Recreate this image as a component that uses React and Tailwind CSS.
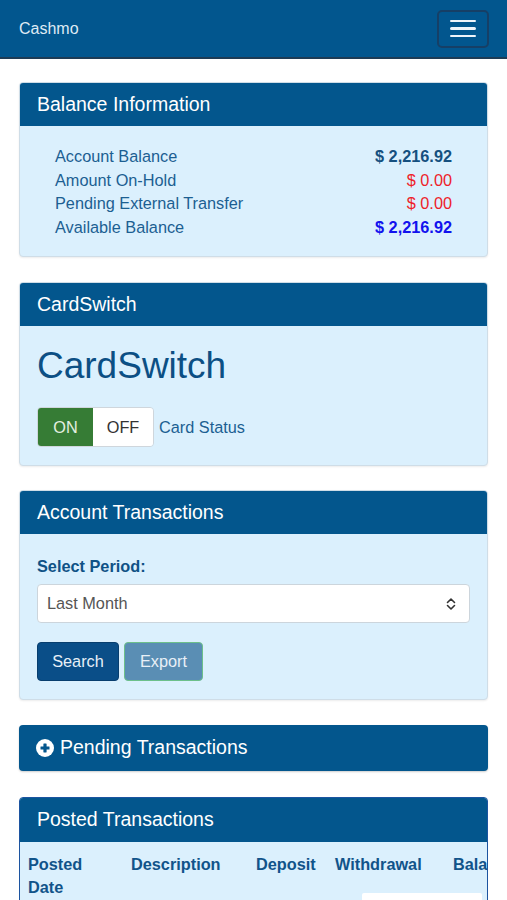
import React from 'react';

const balanceRows = [
    { label: 'Account Balance', value: '$ 2,216.92', tone: 'text-[#15507f] font-bold' },
    { label: 'Amount On-Hold', value: '$ 0.00', tone: 'text-[#ee2229]' },
    { label: 'Pending External Transfer', value: '$ 0.00', tone: 'text-[#ee2229]' },
    { label: 'Available Balance', value: '$ 2,216.92', tone: 'text-[#1212ee] font-bold' },
];

function Panel({ title, children, className = 'mb-[25px]' }) {
    return (
        <section className={`rounded-[4px] border border-[#cfdde7] bg-[#dbf0fd] shadow-[0_1px_2px_rgba(0,0,0,0.08)] overflow-hidden ${className}`}>
            <div className="h-[43px] bg-[#03568d] px-[17px] flex items-center text-[19.5px] text-white">
                {title}
            </div>
            {children}
        </section>
    );
}

function PlusCircle() {
    return (
        <svg width="18" height="18" viewBox="0 0 18 18" className="shrink-0">
            <circle cx="9" cy="9" r="9" fill="#ffffff" />
            <rect x="4.5" y="7.4" width="9" height="3.2" rx="0.4" fill="#03568d" />
            <rect x="7.4" y="4.5" width="3.2" height="9" rx="0.4" fill="#03568d" />
        </svg>
    );
}

function UpDownChevron() {
    return (
        <svg width="12" height="14" viewBox="0 0 12 14" fill="none" stroke="#333" strokeWidth="1.6" strokeLinecap="round" strokeLinejoin="round">
            <path d="M2.5 5.5 6 2l3.5 3.5" />
            <path d="M2.5 8.5 6 12l3.5-3.5" />
        </svg>
    );
}

export default function App() {
    return (
        <div className="min-h-[900px] bg-white font-['Liberation_Sans',Arial,sans-serif]">
            {/* barra superior */}
            <nav className="h-[59px] bg-[#02568e] border-b-2 border-[#1d3b55] flex items-center justify-between pl-[19px] pr-[18px]">
                <span className="text-[16px] text-[#dfeaf4]">Cashmo</span>
                <button className="w-[52px] h-[38px] rounded-[5px] border-2 border-[#163f66] flex flex-col items-center justify-center gap-[5px]">
                    <span className="block w-[26px] h-[2.5px] bg-[#eef4fa] rounded-full" />
                    <span className="block w-[26px] h-[2.5px] bg-[#eef4fa] rounded-full" />
                    <span className="block w-[26px] h-[2.5px] bg-[#eef4fa] rounded-full" />
                </button>
            </nav>

            <main className="px-[19px] pt-[23px]">
                <Panel title="Balance Information">
                    <div className="px-[35px] pt-[19px] pb-[17px] text-[16.3px] leading-[23.5px]">
                        {balanceRows.map((row) => (
                            <div key={row.label} className="flex justify-between">
                                <span className="text-[#1c5f92]">{row.label}</span>
                                <span className={row.tone}>{row.value}</span>
                            </div>
                        ))}
                    </div>
                </Panel>

                <Panel title="CardSwitch" className="mb-[24px]">
                    <div className="px-[17px] pt-[20px] pb-[18px]">
                        <h2 className="text-[37px] leading-[40px] text-[#0c4f84]">CardSwitch</h2>
                        <div className="mt-[21px] flex items-center">
                            <div className="flex h-[40px] rounded-[4px] border border-[#cfd6dc] overflow-hidden text-[16.3px]">
                                <span className="w-[55px] bg-[#367c35] text-[#e3efe0] flex items-center justify-center">ON</span>
                                <span className="w-[60px] bg-white text-[#333] flex items-center justify-center">OFF</span>
                            </div>
                            <span className="ml-[5px] text-[16.3px] text-[#1c5f92]">Card Status</span>
                        </div>
                    </div>
                </Panel>

                <Panel title="Account Transactions">
                    <div className="px-[17px] pt-[21px] pb-[18px]">
                        <label className="block text-[16.3px] font-bold text-[#0f5286] leading-[22px]">Select Period:</label>
                        <div className="mt-[7px] h-[39px] rounded-[4px] border border-[#ccd5dc] bg-white flex items-center justify-between pl-[9px] pr-[12px]">
                            <span className="text-[16.3px] text-[#555]">Last Month</span>
                            <UpDownChevron />
                        </div>
                        <div className="mt-[19px] flex gap-[5px]">
                            <button className="h-[39px] w-[82px] rounded-[4px] border border-[#083e6e] bg-[#0a4e88] text-[16.3px] text-[#e8f0f7]">Search</button>
                            <button className="h-[39px] w-[79px] rounded-[4px] border border-[#6cc08a] bg-[#5a8eb4] text-[16.3px] text-[#e8f0f7]">Export</button>
                        </div>
                    </div>
                </Panel>

                <section className="mb-[26px] rounded-[4px] bg-[#03568d] shadow-[0_1px_2px_rgba(0,0,0,0.2)] h-[46px] px-[17px] flex items-center gap-[6px] text-[19.5px] text-white">
                    <PlusCircle />
                    <span>Pending Transactions</span>
                </section>

                <section className="rounded-[4px] border border-[#1c54a0] bg-[#dbf0fd] overflow-hidden">
                    <div className="h-[44px] bg-[#03568d] px-[17px] flex items-center text-[19.5px] text-white">
                        Posted Transactions
                    </div>
                    <table className="table-fixed w-[600px] text-[16.3px] font-bold text-[#11548a] leading-[23px] text-left">
                        <colgroup>
                            <col className="w-[103px]" />
                            <col className="w-[125px]" />
                            <col className="w-[79px]" />
                            <col className="w-[118px]" />
                            <col className="w-[175px]" />
                        </colgroup>
                        <thead>
                            <tr className="align-top">
                                <th className="px-[8px] pt-[11px]">Posted Date</th>
                                <th className="px-[8px] pt-[11px]">Description</th>
                                <th className="px-[8px] pt-[11px]">Deposit</th>
                                <th className="px-[8px] pt-[11px] whitespace-nowrap">
                                    Withdrawal
                                    <div className="ml-[27px] mt-[17px] h-[30px] w-[120px] bg-white rounded-[2px]" />
                                </th>
                                <th className="px-[8px] pt-[11px]">Balance</th>
                            </tr>
                        </thead>
                    </table>
                </section>
            </main>
        </div>
    );
}
